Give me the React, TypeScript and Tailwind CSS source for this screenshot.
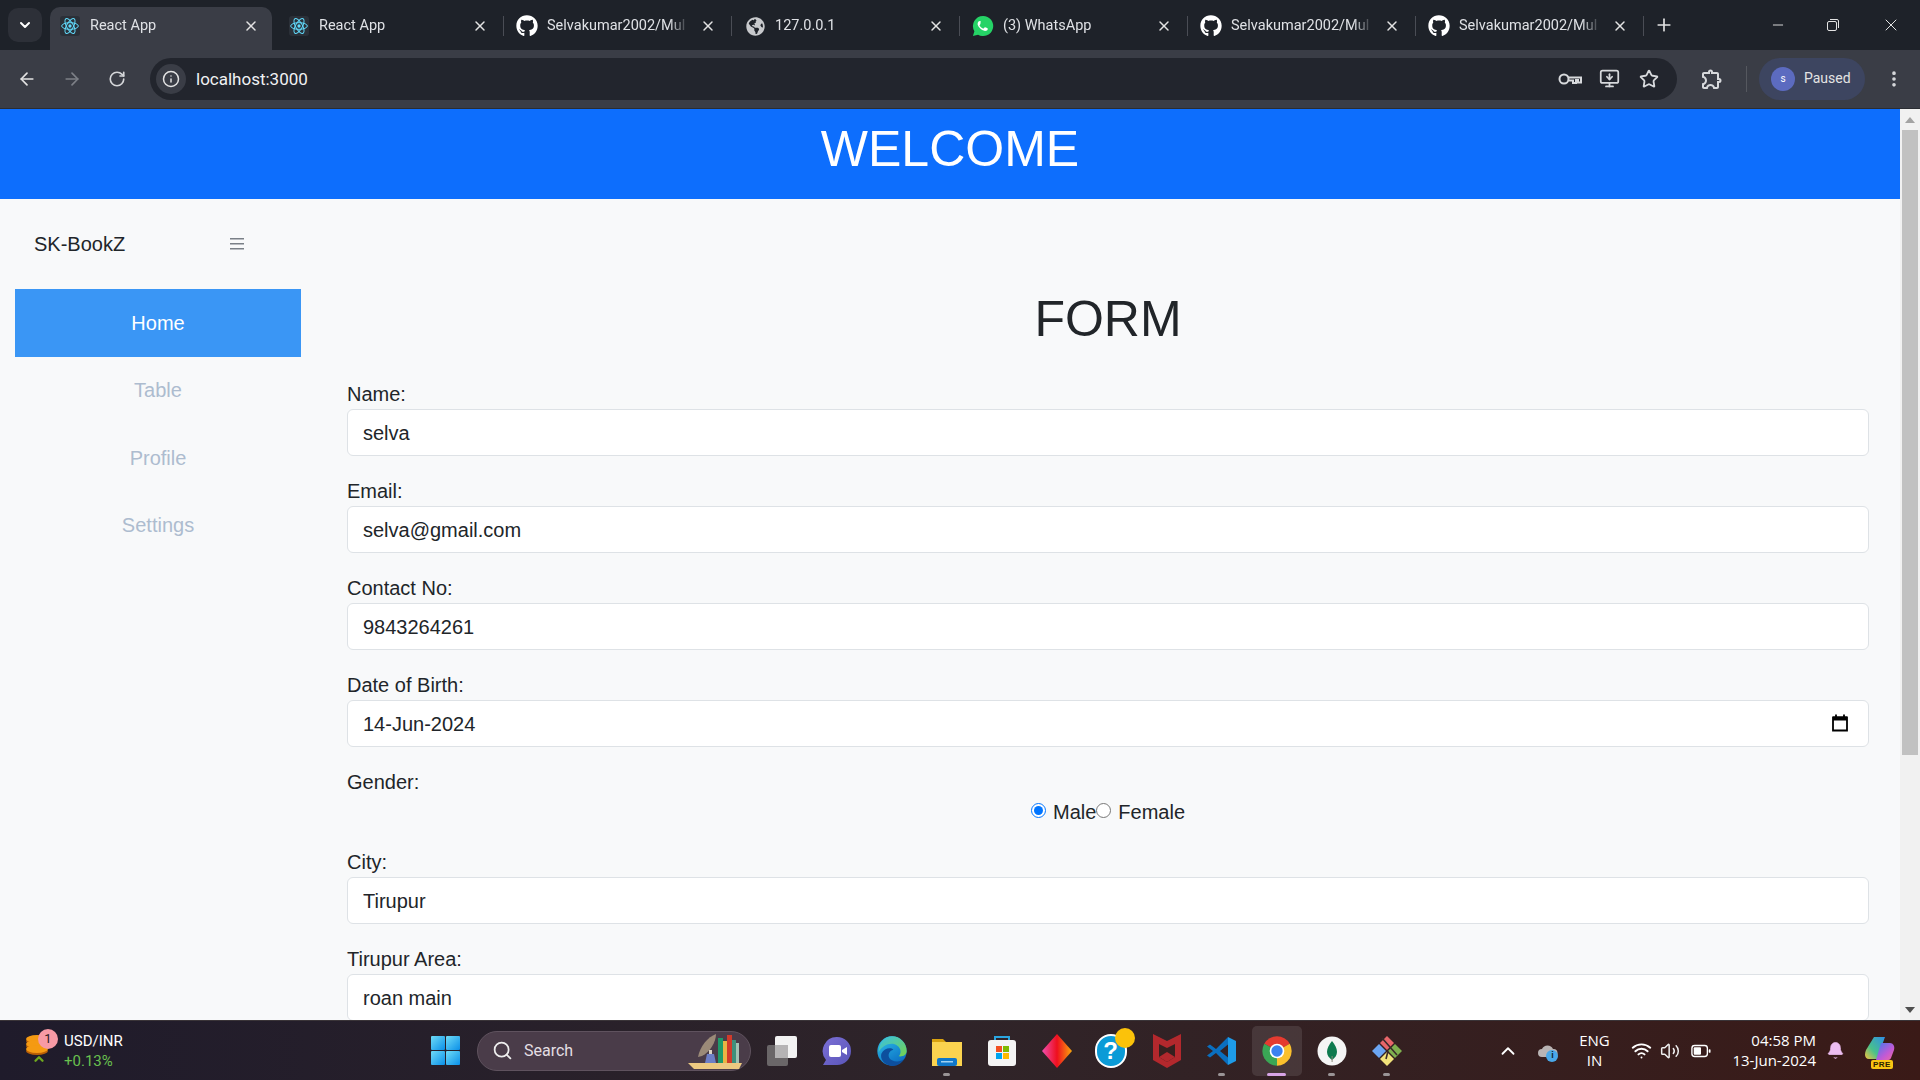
import { ArrowLeft, ArrowRight, RotateCw, Info, X, Plus, Minus, ChevronDown, ChevronUp, Star, MonitorDown, EllipsisVertical, Search, Wifi, Volume2, Bell } from 'lucide-react'
import { FaGithub, FaGlobeAmericas } from 'react-icons/fa'
import { MdOutlineExtension } from 'react-icons/md'

function ReactIcon() {
  return (
    <span className="flex h-5 w-5 items-center justify-center rounded-[3px] bg-[#2b3038]">
      <svg viewBox="0 0 24 24" className="h-5 w-5" fill="none" stroke="#61dafb" strokeWidth="1.2">
        <ellipse cx="12" cy="12" rx="10" ry="4" />
        <ellipse cx="12" cy="12" rx="10" ry="4" transform="rotate(60 12 12)" />
        <ellipse cx="12" cy="12" rx="10" ry="4" transform="rotate(120 12 12)" />
        <circle cx="12" cy="12" r="2" fill="#61dafb" stroke="none" />
      </svg>
    </span>
  )
}

function WhatsappIcon() {
  return (
    <svg viewBox="0 0 24 24" className="h-[22px] w-[22px]">
      <path d="M12 1a11 11 0 0 0-9.4 16.6L1 23l5.6-1.5A11 11 0 1 0 12 1z" fill="#25d366" />
      <path d="M8.3 6.5c-.4 0-.9.2-1.2.6-.5.6-1 1.500-1 2.700 0 1.300.9 2.500 1.100 2.700.100.200 1.900 3 4.600 4.100 2.300.900 2.800.700 3.300.700.500-.100 1.600-.700 1.900-1.300.200-.600.200-1.200.100-1.300-.100-.100-.300-.200-.600-.400l-2.100-1c-.300-.100-.500-.100-.700.200l-1 1.200c-.200.200-.400.200-.700.100-1.700-.700-2.900-1.800-3.700-3.300-.200-.300 0-.500.100-.600l.800-1c.100-.200.100-.400 0-.600L9.500 7c-.200-.500-.500-.500-.700-.500z" fill="#fff" />
    </svg>
  )
}

function KeyIcon() {
  return (
    <svg viewBox="0 0 24 14" className="ml-auto h-[14px] w-[24px]" fill="none" stroke="#d7d9dc" strokeWidth="2">
      <circle cx="6" cy="7" r="4.500" />
      <path d="M10.500 5.500H23v5h-3V8h-2v3h-3V8.500h-4.500" />
    </svg>
  )
}

const tabs = [
  { title: 'React App', icon: <ReactIcon />, active: true },
  { title: 'React App', icon: <ReactIcon /> },
  { title: 'Selvakumar2002/Mul', icon: <FaGithub className="text-[22px] text-white" /> },
  { title: '127.0.0.1', icon: <FaGlobeAmericas className="text-[19px] text-[#c7c9cc]" /> },
  { title: '(3) WhatsApp', icon: <WhatsappIcon /> },
  { title: 'Selvakumar2002/Mul', icon: <FaGithub className="text-[22px] text-white" /> },
  { title: 'Selvakumar2002/Mul', icon: <FaGithub className="text-[22px] text-white" /> },
]

function TabStrip() {
  return (
    <div className="flex h-[50px] items-end bg-[#1e2229]">
      <div className="mb-2 ml-2 mr-2 flex h-[34px] w-[34px] items-center justify-center rounded-[10px] bg-[#2d3038]">
        <ChevronDown size={16} strokeWidth={3} className="text-white" />
      </div>
      {tabs.map((tab, i) => (
        <div
          key={i}
          className={
            tab.active
              ? 'mr-[4px] flex h-[43px] w-[222px] shrink-0 items-center rounded-t-[10px] bg-[#3a3d46] pb-[5px] pl-[6px] pr-[13px]'
              : 'flex h-[43px] w-[228px] shrink-0 items-center pb-[5px] pl-[9px]'
          }
        >
          <span className="flex w-[28px] shrink-0 justify-center">{tab.icon}</span>
          <span className="ml-[6px] w-[142px] overflow-hidden whitespace-nowrap font-['Roboto',sans-serif] text-[14.5px] text-[#dfe1e5] [mask-image:linear-gradient(to_right,black_86%,transparent)]">
            {tab.title}
          </span>
          <X size={16} strokeWidth={2.2} className="ml-auto text-[#e3e3e3]" />
          {!tab.active && <span className="ml-[15px] h-[20px] w-px shrink-0 bg-[#4a4d55]" />}
        </div>
      ))}
      <div className="mb-[10px] flex h-[30px] w-[40px] items-center justify-center">
        <Plus size={20} className="text-[#e3e3e3]" />
      </div>
      <div className="mb-[10px] ml-auto flex h-[30px] items-center text-[#e3e3e3]">
        <Minus size={16} strokeWidth={1.4} className="mr-[40px]" />
        <svg viewBox="0 0 14 14" className="mr-[41px] h-[14px] w-[14px]" fill="none" stroke="#e3e3e3" strokeWidth="1">
          <rect x="1.500" y="3.500" width="9" height="9" rx="1.500" />
          <path d="M4 1.500h7a1.500 1.500 0 0 1 1.500 1.500v7" />
        </svg>
        <X size={20} strokeWidth={1.2} className="mr-[19px]" />
      </div>
    </div>
  )
}

function Toolbar() {
  return (
    <div className="flex h-[59px] items-center border-b border-[#2a2d33] bg-[#3a3d46] pb-px">
      <ArrowLeft size={20} strokeWidth={2} className="ml-[17px] text-[#e3e3e3]" />
      <ArrowRight size={20} strokeWidth={2} className="ml-[25px] text-[#7d8087]" />
      <RotateCw size={18} strokeWidth={2.2} className="ml-[26px] text-[#d5d7da]" />
      <div className="ml-[24px] flex h-[42px] w-[1527px] items-center rounded-full bg-[#22252d]">
        <span className="ml-[6px] flex h-[30px] w-[30px] items-center justify-center rounded-full bg-[#3a3d46]">
          <Info size={18} className="text-[#e3e3e3]" />
        </span>
        <span className="ml-[10px] pt-[2px] font-['Roboto',sans-serif] text-[17px] text-[#f0f1f3]">localhost:3000</span>
        <KeyIcon />
        <MonitorDown size={21} strokeWidth={2} className="ml-[17px] text-[#d7d9dc]" />
        <Star size={20} strokeWidth={2.2} className="ml-[19px] mr-[18px] text-[#d7d9dc]" />
      </div>
      <MdOutlineExtension className="ml-[23px] text-[24px] text-[#d7d9dc]" />
      <span className="ml-[22px] h-[26px] w-px bg-[#55585f]" />
      <div className="ml-[12px] flex h-[42px] w-[106px] items-center rounded-full bg-[#3d4560]">
        <span className="ml-[12px] flex h-[24px] w-[24px] items-center justify-center rounded-full bg-[#5c6bc0] font-['Roboto',sans-serif] text-[10px] text-white">
          s
        </span>
        <span className="ml-[9px] font-['Roboto',sans-serif] text-[14px] text-[#e3e3e3]">Paused</span>
      </div>
      <EllipsisVertical size={20} strokeWidth={2.4} className="ml-[19px] text-[#d7d9dc]" />
    </div>
  )
}

const navItems = ['Home', 'Table', 'Profile', 'Settings']

function Sidebar() {
  return (
    <aside className="w-[314px] shrink-0">
      <div className="flex h-[90px] items-center pl-[34px]">
        <span className="w-[196px] text-[20px] text-[#212529]">SK-BookZ</span>
        <svg viewBox="0 0 14 12" className="h-[12px] w-[14px]" fill="#7a8087">
          <rect y="0" width="14" height="1.500" />
          <rect y="5" width="14" height="1.500" />
          <rect y="10" width="14" height="1.500" />
        </svg>
      </div>
      <nav className="ml-[15px] w-[286px]">
        {navItems.map((item, i) => (
          <div
            key={item}
            className={
              i === 0
                ? 'flex h-[68px] items-center justify-center bg-[#3a96f5] text-[20px] text-white'
                : i === 1
                  ? 'flex h-[67px] items-center justify-center pb-[2px] text-[20px] text-[#adbccf]'
                  : 'flex h-[67px] items-center justify-center text-[20px] text-[#adbccf]'
            }
          >
            {item}
          </div>
        ))}
      </nav>
    </aside>
  )
}

function Field({ label, value, calendar }: { label: string; value: string; calendar?: boolean }) {
  return (
    <div className="mb-[20px]">
      <label className="block h-[30px] text-[20px] leading-[30px] text-[#212529]">{label}</label>
      <div className="relative">
        <input
          readOnly
          value={value}
          className="block h-[47px] w-full rounded-[6px] border border-[#dee2e6] bg-white px-[15px] pt-[1px] text-[20px] text-[#212529] outline-none"
        />
        {calendar && (
          <svg viewBox="0 0 16 18" className="absolute right-[21px] top-[14px] h-[18px] w-[16px]">
            <path d="M1 3.500h14v13H1z" fill="none" stroke="#000" strokeWidth="1.800" />
            <path d="M1 2.500h14v4H1z" fill="#000" />
            <path d="M4 .5v3M12 .5v3" stroke="#000" strokeWidth="1.800" />
          </svg>
        )}
      </div>
    </div>
  )
}

function FormPanel() {
  return (
    <main className="min-w-0 flex-1 pl-[33px] pr-[31px] pt-[90px]">
      <h1 className="mb-[30px] h-[60px] text-center text-[50px] leading-[60px] text-[#212529]">FORM</h1>
      <Field label="Name:" value="selva" />
      <Field label="Email:" value="selva@gmail.com" />
      <Field label="Contact No:" value="9843264261" />
      <Field label="Date of Birth:" value="14-Jun-2024" calendar />
      <div className="mb-[20px]">
        <label className="block h-[30px] text-[20px] leading-[30px] text-[#212529]">Gender:</label>
        <div className="flex h-[30px] items-center justify-center text-[20px] leading-[30px] text-[#212529]">
          <input type="radio" name="gender" defaultChecked className="m-0 mb-[3px] h-[15px] w-[15px] accent-[#0075ff]" />
          <span className="ml-[7px]">Male</span>
          <input type="radio" name="gender" className="m-0 mb-[3px] h-[15px] w-[15px]" />
          <span className="ml-[7px]">Female</span>
        </div>
      </div>
      <Field label="City:" value="Tirupur" />
      <Field label="Tirupur Area:" value="roan main" />
    </main>
  )
}

function Scrollbar() {
  return (
    <div className="flex w-[20px] shrink-0 flex-col items-center bg-[#f1f1f1]">
      <div className="flex h-[21px] items-center justify-center">
        <span className="h-0 w-0 border-x-[5px] border-b-[6px] border-x-transparent border-b-[#a3a3a3]" />
      </div>
      <div className="h-[625px] w-[16px] bg-[#c1c1c1]" />
      <div className="mt-auto flex h-[21px] items-center justify-center">
        <span className="h-0 w-0 border-x-[5px] border-t-[6px] border-x-transparent border-t-[#505050]" />
      </div>
    </div>
  )
}

function Coins() {
  return (
    <svg viewBox="0 0 24 22" className="h-[22px] w-[24px]">
      {[5, 10, 15].map((y) => (
        <g key={y}>
          <ellipse cx="12" cy={y + 2} rx="11" ry="4" fill="#b95f06" />
          <ellipse cx="12" cy={y} rx="11" ry="4" fill="#f59a12" />
        </g>
      ))}
    </svg>
  )
}

function WindowsLogo() {
  return (
    <svg viewBox="0 0 29 29" className="h-[29px] w-[29px]">
      <defs>
        <linearGradient id="win" x1="0" y1="0" x2="1" y2="1">
          <stop offset="0" stopColor="#6fdcf7" />
          <stop offset="1" stopColor="#0a8fe8" />
        </linearGradient>
      </defs>
      <rect x="0" y="0" width="14" height="14" rx="1" fill="url(#win)" />
      <rect x="15" y="0" width="14" height="14" rx="1" fill="url(#win)" />
      <rect x="0" y="15" width="14" height="14" rx="1" fill="url(#win)" />
      <rect x="15" y="15" width="14" height="14" rx="1" fill="url(#win)" />
    </svg>
  )
}

function BooksArt() {
  return (
    <svg viewBox="0 0 58 38" className="h-[38px] w-[58px]">
      <path d="M2 31h54l-3 6H8z" fill="#ecc981" />
      <path d="M12 25C14 14 22 5 30 2 30 10 24 20 16 24z" fill="#9b8a78" />
      <path d="M21 22h7l2 9H19z" fill="#6d7fc6" />
      <rect x="23" y="18" width="3" height="4" fill="#d9d2c4" />
      <rect x="32" y="6" width="5" height="25" fill="#1f9a6a" />
      <rect x="37" y="9" width="4" height="22" fill="#e9b544" />
      <rect x="41" y="3" width="5" height="28" fill="#d13b2b" />
      <rect x="46" y="8" width="4" height="23" fill="#3f8f7b" />
      <rect x="50" y="11" width="3" height="20" fill="#a3c2b4" />
    </svg>
  )
}

function TaskView() {
  return (
    <svg viewBox="0 0 30 30" className="h-[30px] w-[30px]">
      <rect x="0" y="9" width="21" height="21" rx="2" fill="#6a6668" />
      <rect x="8" y="0" width="22" height="22" rx="2" fill="#f2f2f2" />
      <rect x="8" y="9" width="13" height="13" fill="#b5b3b4" />
    </svg>
  )
}

function TeamsIcon() {
  return (
    <svg viewBox="0 0 30 30" className="h-[30px] w-[30px]">
      <defs>
        <linearGradient id="teams" x1="0" y1="0" x2="1" y2="1">
          <stop offset="0" stopColor="#7b6fd6" />
          <stop offset="1" stopColor="#5a55b8" />
        </linearGradient>
      </defs>
      <path d="M15 1a14 14 0 0 1 0 28H1l3-5A14 14 0 0 1 15 1z" fill="url(#teams)" />
      <rect x="7" y="9" width="12" height="12" rx="2" fill="#fff" />
      <path d="M20 14l5-3v8l-5-3z" fill="#fff" />
    </svg>
  )
}

function EdgeIcon() {
  return (
    <svg viewBox="0 0 48 48" className="h-[32px] w-[32px]">
      <defs>
        <linearGradient id="edge" x1="0" y1="0" x2="0.6" y2="1">
          <stop offset="0" stopColor="#2fc3ea" />
          <stop offset="1" stopColor="#0c6fc4" />
        </linearGradient>
        <linearGradient id="edgeTop" x1="0" y1="0" x2="1" y2="1">
          <stop offset="0" stopColor="#37bfe8" />
          <stop offset="1" stopColor="#75d44c" />
        </linearGradient>
      </defs>
      <circle cx="24" cy="24" r="22" fill="url(#edge)" />
      <path d="M24 2a22 22 0 0 1 22 22c0 6-6 9-12 8 4-4 4-12-2-16-8-6-22-2-28 10C4 12 13 2 24 2z" fill="url(#edgeTop)" />
      <path d="M22 46C12 44 6 36 8 28c4-8 14-10 18-6-8 2-10 12-2 16 6 3 14 2 18-2-4 7-12 12-20 10z" fill="#0d4f9e" />
    </svg>
  )
}

function ExplorerIcon() {
  return (
    <svg viewBox="0 0 30 30" className="h-[30px] w-[30px]">
      <path d="M0 3h11l3 3h-14z" fill="#d9a20f" />
      <rect x="0" y="6" width="30" height="24" fill="#fbd34f" />
      <rect x="5" y="22" width="20" height="8" rx="2" fill="#0f77c9" />
      <rect x="9" y="25" width="12" height="1.500" fill="#9fd2f3" />
    </svg>
  )
}

function StoreIcon() {
  return (
    <svg viewBox="0 0 30 32" className="h-[32px] w-[30px]">
      <path d="M8 6V2h14v4" fill="none" stroke="#2aa5e0" strokeWidth="2" />
      <rect x="1" y="5" width="28" height="26" rx="3" fill="#f4f4f4" />
      <rect x="9" y="11" width="6" height="6" fill="#f25022" />
      <rect x="16" y="11" width="6" height="6" fill="#7fba00" />
      <rect x="9" y="18" width="6" height="6" fill="#00a4ef" />
      <rect x="16" y="18" width="6" height="6" fill="#ffb900" />
    </svg>
  )
}

function DiamondIcon() {
  return (
    <svg viewBox="0 0 30 34" className="h-[34px] w-[30px]">
      <defs>
        <linearGradient id="dia" x1="0" y1="0" x2="1" y2="0">
          <stop offset="0" stopColor="#f04fb0" />
          <stop offset="0.5" stopColor="#ee0f1e" />
          <stop offset="1" stopColor="#f9a80c" />
        </linearGradient>
      </defs>
      <path d="M15 0l15 17-15 17L0 17z" fill="url(#dia)" />
    </svg>
  )
}

function HelpIcon() {
  return (
    <div className="relative h-[34px] w-[34px]">
      <div className="flex h-[34px] w-[32px] items-center justify-center rounded-full border-2 border-white bg-[#0b9bd7] font-['Liberation_Sans',sans-serif] text-[24px] font-bold text-white">
        ?
      </div>
      <span className="absolute -right-[6px] -top-[6px] h-[20px] w-[20px] rounded-full bg-[#fbc20a]" />
    </div>
  )
}

function McAfeeIcon() {
  return (
    <svg viewBox="0 0 28 34" className="h-[34px] w-[28px]">
      <path d="M0 0l14 7 14-7v26l-14 8-14-8z" fill="#b3282d" />
      <path d="M6 10l8 4 8-4v13l-8 5-8-5z" fill="#35201f" />
      <path d="M6 23l8-5 8 5-8 5z" fill="#b3282d" />
    </svg>
  )
}

function VsCodeIcon() {
  return (
    <svg viewBox="0 0 30 30" className="h-[30px] w-[30px]">
      <path d="M21 1l8 4v20l-8 4z" fill="#1e9be8" />
      <path d="M21 1L9 13 3 8.500 0 10.500 6 15 0 19.500l3 2L9 17l12 12v-7.500L13 15l8-6.500z" fill="#0a6fc0" />
    </svg>
  )
}

function ChromeIcon() {
  return (
    <svg viewBox="0 0 48 48" className="h-[32px] w-[32px]">
      <path d="M24 24L4.950 13A22 22 0 0 1 43.050 13Z" fill="#e53b30" />
      <path d="M24 24L43.050 13A22 22 0 0 1 24 46Z" fill="#fbc02d" />
      <path d="M24 24L24 46A22 22 0 0 1 4.950 13Z" fill="#3aa655" />
      <circle cx="24" cy="24" r="11" fill="#fff" />
      <circle cx="24" cy="24" r="8.500" fill="#3b82f0" />
    </svg>
  )
}

function MongoIcon() {
  return (
    <svg viewBox="0 0 30 30" className="h-[30px] w-[30px]">
      <circle cx="15" cy="15" r="14.500" fill="#f5f5f5" />
      <path d="M15 5c3 4 5 7 5 11 0 3-2 6-5 8-3-2-5-5-5-8 0-4 2-7 5-11z" fill="#0f7a4f" />
      <rect x="14.600" y="20" width="1" height="6" fill="#8a8a7a" />
    </svg>
  )
}

function GitToolIcon() {
  return (
    <svg viewBox="0 0 32 32" className="h-[32px] w-[32px]">
      <path d="M9 8l7-7 7 7-7 7z" fill="#e8666a" />
      <path d="M1 16l7-7 7 7-7 7z" fill="#6ba5f2" />
      <path d="M17 16l7-7 7 7-7 7z" fill="#7fb04f" />
      <path d="M9 24l7-7 7 7-7 7z" fill="#f1e27a" />
      <path d="M11 3l15 17M17 16l-2 8" stroke="#3a2a2a" strokeWidth="1.600" fill="none" />
    </svg>
  )
}

function CopilotIcon() {
  return (
    <div className="relative h-[32px] w-[30px]">
      <svg viewBox="0 0 30 26" className="h-[26px] w-[30px]">
        <defs>
          <linearGradient id="cop" x1="0" y1="1" x2="1" y2="0">
            <stop offset="0" stopColor="#f5c33b" />
            <stop offset="0.4" stopColor="#48c18b" />
            <stop offset="1" stopColor="#2f8ee8" />
          </linearGradient>
          <linearGradient id="cop2" x1="0" y1="0" x2="1" y2="1">
            <stop offset="0" stopColor="#3b7cf0" />
            <stop offset="0.6" stopColor="#c05ad6" />
            <stop offset="1" stopColor="#f26aa0" />
          </linearGradient>
        </defs>
        <path d="M9 2h11l-8 22H4C0 24-1 20 1 15z" fill="url(#cop)" />
        <path d="M16 8h9c3 0 5 3 4 7l-3 8c-1 2-2 2-4 2H11z" fill="url(#cop2)" />
      </svg>
      <span className="absolute -bottom-[2px] left-[6px] rounded-[2px] bg-[#f9c513] px-[2px] font-['Liberation_Sans',sans-serif] text-[8px] font-bold leading-[9px] tracking-[0.5px] text-[#2b2100]">
        PRE
      </span>
    </div>
  )
}

const pinned = [
  { key: 'task', icon: <TaskView /> },
  { key: 'teams', icon: <TeamsIcon /> },
  { key: 'edge', icon: <EdgeIcon /> },
  { key: 'explorer', icon: <ExplorerIcon />, running: true },
  { key: 'store', icon: <StoreIcon /> },
  { key: 'diamond', icon: <DiamondIcon /> },
  { key: 'help', icon: <HelpIcon /> },
  { key: 'mcafee', icon: <McAfeeIcon /> },
  { key: 'vscode', icon: <VsCodeIcon />, running: true },
  { key: 'chrome', icon: <ChromeIcon />, active: true },
  { key: 'mongo', icon: <MongoIcon />, running: true },
  { key: 'git', icon: <GitToolIcon />, running: true },
]

function Taskbar() {
  return (
    <div className="flex h-[60px] shrink-0 items-center border-t border-[#3a3438] bg-gradient-to-r from-[#1f1b2b] via-[#2f2429] via-50% to-[#3a1a17] text-white">
      <div className="flex w-[418px] shrink-0 items-center pl-[25px]">
        <div className="relative h-[44px] w-[39px]">
          <div className="pt-[5px]">
            <Coins />
          </div>
          <span className="absolute left-[13px] top-[0px] flex h-[20px] w-[20px] items-center justify-center rounded-full bg-[#f79aa5] font-['Roboto',sans-serif] text-[13px] text-[#2b1b1f]">
            1
          </span>
          <ChevronUp size={14} strokeWidth={4} className="absolute bottom-[7px] left-[7px] text-[#6fa81e]" />
        </div>
        <div className="flex flex-col font-['Roboto',sans-serif] leading-[20px]">
          <span className="text-[15px] text-white">USD/INR</span>
          <span className="text-[15px] text-[#69c04f]">+0.13%</span>
        </div>
      </div>
      <div className="flex w-[55px] shrink-0 justify-center">
        <WindowsLogo />
      </div>
      <div className="ml-[4px] flex h-[40px] w-[274px] shrink-0 items-center rounded-full border border-[#5f525e] bg-[#4a3c49]">
        <Search size={21} strokeWidth={2} className="ml-[14px] text-[#eee]" />
        <span className="ml-[11px] font-['Roboto',sans-serif] text-[16px] text-[#e4dfe3]">Search</span>
        <div className="ml-auto mr-[6px]">
          <BooksArt />
        </div>
      </div>
      <div className="ml-[3px] flex shrink-0">
        {pinned.map((app) => (
          <div key={app.key} className="relative flex h-[50px] w-[55px] items-center justify-center">
            {app.active && <span className="absolute inset-y-0 left-[2.500px] w-[50px] rounded-[5px] bg-white/10" />}
            <span className="relative">{app.icon}</span>
            {app.running && <span className="absolute bottom-0 left-[24px] h-[3px] w-[7px] rounded-full bg-[#9a9496]" />}
            {app.active && <span className="absolute bottom-0 left-[18px] h-[3px] w-[19px] rounded-full bg-[#d8a4e6]" />}
          </div>
        ))}
      </div>
      <div className="ml-auto flex items-center">
        <ChevronUp size={22} strokeWidth={2} className="text-white" />
        <div className="relative ml-[18px] h-[18px] w-[22px]">
          <svg viewBox="0 0 22 14" className="absolute left-0 top-[2px] h-[14px] w-[22px]">
            <path d="M5 13a4 4 0 0 1 0-8 6 6 0 0 1 11 0 4 4 0 0 1 1 8z" fill="#b9b4b4" />
          </svg>
          <span className="absolute -bottom-[2px] left-[9px] flex h-[12px] w-[12px] items-center justify-center rounded-full bg-[#4aa8e8] font-['Liberation_Sans',sans-serif] text-[9px] font-bold text-[#10242f]">
            i
          </span>
        </div>
        <div className="ml-[18px] flex w-[34px] flex-col items-center pb-[2px] font-['Open_Sans',sans-serif] text-[15px] leading-[20px] text-white">
          <span>ENG</span>
          <span>IN</span>
        </div>
        <Wifi size={21} strokeWidth={2.2} className="ml-[20px] text-white" />
        <Volume2 size={20} strokeWidth={1.8} className="ml-[8px] text-[#eee]" />
        <svg viewBox="0 0 22 14" className="ml-[11px] h-[14px] w-[20px]">
          <rect x="1" y="1" width="17" height="12" rx="3" fill="none" stroke="#fff" strokeWidth="1.500" />
          <rect x="3" y="3" width="8" height="8" rx="1" fill="#fff" />
          <rect x="19.500" y="5" width="2" height="4" rx="1" fill="#fff" />
        </svg>
        <div className="ml-[21px] flex flex-col items-end pb-[2px] font-['Open_Sans',sans-serif] text-[15px] leading-[20px] text-white">
          <span>04:58 PM</span>
          <span>13-Jun-2024</span>
        </div>
        <Bell size={19} fill="#ecbdf0" strokeWidth={1} className="ml-[10px] text-[#ecbdf0]" />
        <div className="ml-[20px] mr-[25px]">
          <CopilotIcon />
        </div>
      </div>
    </div>
  )
}

export default function App() {
  return (
    <div className="flex h-screen w-full flex-col overflow-hidden bg-[#f8f9fa] font-['Liberation_Sans',Arial,sans-serif]">
      <TabStrip />
      <Toolbar />
      <div className="flex min-h-0 flex-1">
        <div className="min-w-0 flex-1 overflow-hidden">
          <header className="flex h-[90px] items-center justify-center bg-[#0d6efd] pb-[10px] text-[50px] text-white">WELCOME</header>
          <div className="flex">
            <Sidebar />
            <FormPanel />
          </div>
        </div>
        <Scrollbar />
      </div>
      <Taskbar />
    </div>
  )
}
